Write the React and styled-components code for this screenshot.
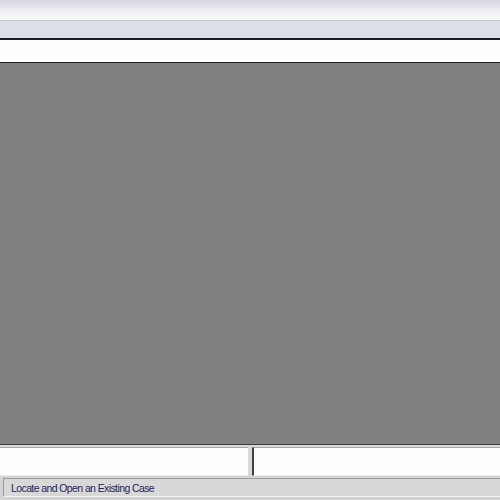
import React from "react";
import styled, { createGlobalStyle } from "styled-components";

const Global = createGlobalStyle`
  html, body { margin: 0; padding: 0; width: 500px; height: 500px; overflow: hidden; }
  body { font-family: "Liberation Sans", Tahoma, sans-serif; }
  #root { width: 500px; height: 500px; }
`;

const Frame = styled.div`
  width: 500px;
  height: 500px;
  display: flex;
  flex-direction: column;
  background: #d6d6d6;
`;

const TitleBar = styled.div`
  height: 20px;
  background: linear-gradient(#d6d6e2, #eeeef2 50%, #f8f9f8);
  border-bottom: 1px solid #c4c8d0;
`;

const ToolBand = styled.div`
  height: 17px;
  background: #dcdfe6;
  border-bottom: 2px solid #1c1c28;
`;

const AddressBar = styled.div`
  height: 22px;
  background: #fefefe;
  border-bottom: 1px solid #1c1c24;
`;

const Workspace = styled.div`
  flex: 1;
  background: #808080;
  border-bottom: 1px solid #3c3c3c;
`;

const PaneRow = styled.div`
  height: 29px;
  display: flex;
  gap: 4px;
  padding-top: 2px;
  background: #d8d8d8;
`;

const Pane = styled.div`
  flex: ${(p) => (p.$wide ? "0 0 248px" : "1")};
  background: #fdfdfd;
  border-top: 1px solid #a8a8a8;
  border-left: ${(p) => (p.$sunken ? "2px solid #404040" : "none")};
  border-bottom: 1px solid #ececec;
`;

const StatusRow = styled.div`
  height: 24px;
  display: flex;
  align-items: stretch;
  padding: 2px 0 3px 3px;
  box-sizing: border-box;
  background: #d4d4d4;
`;

const StatusPanel = styled.div`
  flex: 1;
  display: flex;
  align-items: center;
  padding-left: 7px;
  border-top: 1px solid #9a9a9a;
  border-left: 1px solid #9a9a9a;
  border-bottom: 1px solid #f4f4f4;
  background: #d8d8d8;
  font-size: 10.5px;
  letter-spacing: -0.6px;
  color: #24245c;
`;

export default function App() {
  return (
    <Frame>
      <Global />
      <TitleBar />
      <ToolBand />
      <AddressBar />
      <Workspace />
      <PaneRow>
        <Pane $wide />
        <Pane $sunken />
      </PaneRow>
      <StatusRow>
        <StatusPanel>Locate and Open an Existing Case</StatusPanel>
      </StatusRow>
    </Frame>
  );
}
